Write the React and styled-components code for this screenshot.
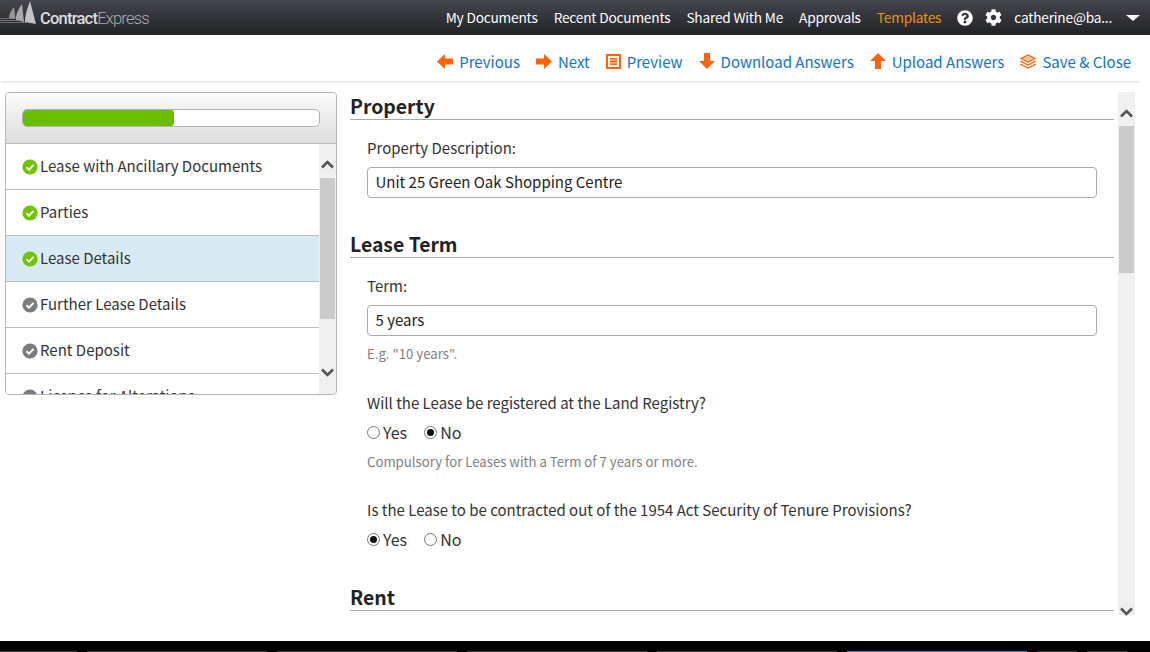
import React from "react";
import styled, { createGlobalStyle } from "styled-components";
import { FaCog, FaQuestionCircle } from "react-icons/fa";

const Global = createGlobalStyle`
  html, body { margin: 0; padding: 0; height: 652px; overflow: hidden; background: #fff; }
  #root { height: 652px; }
  * { box-sizing: border-box; }
`;

const Page = styled.div`
  height: 652px;
  display: flex;
  flex-direction: column;
  font-family: "Noto Sans CJK SC", "Noto Sans", sans-serif;
  color: #333;
`;

const Header = styled.header`
  height: 35px;
  flex: none;
  display: flex;
  align-items: center;
  justify-content: space-between;
  background: linear-gradient(#45464e, #212226);
  color: #fff;
  overflow: hidden;
`;

const Logo = styled.div`
  display: flex;
  align-items: flex-start;
  height: 35px;
  font-family: "Roboto", sans-serif;
  font-size: 16.5px;
  letter-spacing: -0.78px;
`;

const LogoText = styled.div`
  margin: 9px 0 0 3px;
  line-height: 20px;
`;

const LogoBold = styled.span`
  font-weight: 500;
  color: #dcdcdc;
`;

const LogoLight = styled.span`
  color: #aeaeb1;
  font-weight: 300;
`;

const Nav = styled.nav`
  display: flex;
  align-items: center;
  font-size: 13.7px;
  letter-spacing: -0.2px;
  height: 35px;
`;

const NavItem = styled.span`
  margin-left: ${(p) => p.$gap ?? 16}px;
  color: ${(p) => (p.$active ? "#f39200" : "#fff")};
  white-space: nowrap;
  line-height: 1;
  display: flex;
  align-items: center;
`;

const Caret = styled.span`
  width: 0;
  height: 0;
  margin: 0 10px 0 14px;
  border-left: 7.5px solid transparent;
  border-right: 7.5px solid transparent;
  border-top: 6px solid #fff;
`;

const Toolbar = styled.div`
  height: 48px;
  flex: none;
  display: flex;
  align-items: center;
  justify-content: flex-end;
  margin: 0 10px 0 1px;
  padding: 6px 9px 0 0;
  border-bottom: 2px solid #eee;
`;

const Action = styled.a`
  display: flex;
  align-items: center;
  margin-left: ${(p) => p.$gap ?? 16}px;
  color: #0f74c8;
  font-size: 15px;
  white-space: nowrap;
  line-height: 1;
  gap: 6px;
`;

const Body = styled.div`
  flex: 1;
  min-height: 0;
  display: flex;
  align-items: flex-start;
  padding: 9px 15px 0 5px;
`;

const Panel = styled.aside`
  width: 332px;
  height: 303px;
  flex: none;
  border: 1px solid #b4b4b4;
  border-radius: 4px;
  display: flex;
  flex-direction: column;
  overflow: hidden;
`;

const ProgressHead = styled.div`
  height: 51px;
  flex: none;
  padding: 16px 16px 0;
  background: linear-gradient(#fafafa, #dedede);
  border-bottom: 1px solid #b9b9b9;
`;

const ProgressTrack = styled.div`
  height: 18px;
  background: #fff;
  border: 1px solid #b0b0b0;
  border-radius: 5px;
  overflow: hidden;
`;

const ProgressFill = styled.div`
  height: 100%;
  background: #6bbd00;
  border-radius: 3px;
`;

const PanelBody = styled.div`
  flex: 1;
  min-height: 0;
  display: flex;
`;

const List = styled.div`
  flex: 1;
  min-width: 0;
  overflow: hidden;
`;

const ListItem = styled.div`
  height: 46px;
  display: flex;
  align-items: center;
  gap: 2px;
  padding: 0 0 0 16px;
  font-size: 15px;
  line-height: 1;
  color: #333;
  background: ${(p) => (p.$selected ? "#d8ebf4" : "#fff")};
  border-bottom: 1px solid #bcbcbc;
`;

const ItemText = styled.span`
  position: relative;
  top: -1px;
`;

const Track = styled.div`
  width: 17px;
  flex: none;
  background: #f0f0f0;
  padding: 0 1px;
  display: flex;
  flex-direction: column;
  align-items: center;
`;

const ArrowBtn = styled.div`
  height: ${(p) => p.$h}px;
  padding-top: ${(p) => p.$pad ?? 0}px;
  flex: none;
  display: flex;
  align-items: center;
  justify-content: center;
`;

const TrackSpace = styled.div`
  flex: 1;
  min-height: 0;
  width: 100%;
`;

const Thumb = styled.div`
  height: ${(p) => p.$h}px;
  flex: none;
  width: 100%;
  background: #cbcbcb;
`;

const Main = styled.main`
  flex: 1;
  min-width: 0;
  height: 523px;
  margin-left: 13px;
  display: flex;
`;

const Content = styled.div`
  flex: 1;
  min-width: 0;
  overflow: hidden;
  padding-right: 4px;
`;

const SectionTitle = styled.h2`
  margin: ${(p) => p.$top}px 0 0;
  height: 28px;
  font-size: 19.4px;
  line-height: 28px;
  font-weight: 700;
  color: #222;
  border-bottom: 1px solid #a9a9a9;
`;

const Field = styled.div`
  margin: ${(p) => p.$top}px 0 0 17px;
  width: 730px;
`;

const Label = styled.div`
  font-size: 15px;
  line-height: 20px;
  color: #333;
`;

const TextBox = styled.div`
  height: 31px;
  margin-top: 9px;
  padding: 0 7.5px 2px;
  border: 1px solid #ababab;
  border-radius: 4px;
  display: flex;
  align-items: center;
  font-size: 15px;
  color: #222;
`;

const Hint = styled.div`
  margin-top: ${(p) => p.$top}px;
  font-size: 13.2px;
  line-height: 18px;
  color: #808080;
`;

const RadioRow = styled.div`
  display: flex;
  align-items: center;
  margin-top: 9px;
  height: 20px;
  font-size: 16px;
  line-height: 20px;
`;

const RadioOption = styled.label`
  display: flex;
  align-items: center;
  gap: 3px;
  margin-right: 17px;
  color: #333;
`;

const RadioDot = styled.span`
  width: 13px;
  height: 13px;
  border-radius: 50%;
  border: 1px solid #777;
  background: #fff;
  display: flex;
  align-items: center;
  justify-content: center;
  &::after {
    content: "";
    width: 7px;
    height: 7px;
    border-radius: 50%;
    background: ${(p) => (p.$on ? "#111" : "transparent")};
  }
`;

const Taskbar = styled.footer`
  height: 11px;
  flex: none;
  background: #000;
  display: flex;
  align-items: flex-end;
  gap: 10px;
`;

const TaskSlot = styled.div`
  height: 1px;
  width: ${(p) => p.$w}px;
  background: ${(p) => (p.$active ? "#3b82d6" : "#3a3a3a")};
`;

const Check = ({ grey }) => (
  <svg width="16" height="16" viewBox="0 0 16 16" style={{ flex: "none" }}>
    <circle cx="8" cy="8" r="7.6" fill={grey ? "#7b7b7b" : "#6fc400"} />
    <path d="M4.4 8.2 L7 10.7 L11.6 5.9" fill="none" stroke="#fff" strokeWidth="2" />
  </svg>
);

const Chevron = ({ down }) => (
  <svg width="13" height="9" viewBox="0 0 13 9">
    <path d={down ? "M1 1.5 L6.5 7 L12 1.5" : "M1 7.5 L6.5 2 L12 7.5"} fill="none" stroke="#555" strokeWidth="2.6" />
  </svg>
);

const O = "#f9650c";
const ArrowLeft = () => (
  <svg width="16" height="15" viewBox="0 0 16 15"><path d="M0 7.5 L8 0 V4.5 H16 V10.5 H8 V15 Z" fill={O} /></svg>
);
const ArrowRight = () => (
  <svg width="16" height="15" viewBox="0 0 16 15"><path d="M16 7.5 L8 0 V4.5 H0 V10.5 H8 V15 Z" fill={O} /></svg>
);
const ArrowDown = () => (
  <svg width="16" height="16" viewBox="0 0 16 16"><path d="M8 16 L0 8 H5 V0 H11 V8 H16 Z" fill={O} /></svg>
);
const ArrowUp = () => (
  <svg width="16" height="16" viewBox="0 0 16 16"><path d="M8 0 L16 8 H11 V16 H5 V8 H0 Z" fill={O} /></svg>
);
const PreviewIcon = () => (
  <svg width="15" height="15" viewBox="0 0 15 15">
    <rect x="1" y="1" width="13" height="13" fill="#fff" stroke={O} strokeWidth="2" />
    <rect x="4" y="4" width="7" height="7" fill="#fa9a5c" />
    <path d="M4 4.5 H11 M4 7.5 H11 M4 10.5 H11" stroke={O} strokeWidth="1" />
  </svg>
);
const LayersIcon = () => (
  <svg width="16" height="15" viewBox="0 0 16 15" fill="none" stroke={O} strokeWidth="1.3">
    <path d="M8 1 L15 4.5 L8 8 L1 4.5 Z" fill="#fcc7a3" />
    <path d="M2.2 7 L1 7.6 L8 11 L15 7.6 L13.8 7" />
    <path d="M2.2 10 L1 10.6 L8 14 L15 10.6 L13.8 10" />
  </svg>
);

const LogoMark = () => (
  <svg width="37" height="24" viewBox="0 0 37 24">
    <path d="M9 18 C9 14 11 11 14 7 L15.5 19 Z" fill="#98989a" />
    <path d="M16 20 C15.5 14 19 8 22 4 L24 22 Z" fill="#a8a8aa" />
    <path d="M25 22 C25 14 28 7 30 1 L36 24 Z" fill="#c2c2c4" />
    <path d="M0 18.5 H14 M0 20.5 H20 M0 22.5 H27" stroke="#85858a" strokeWidth="0.7" />
  </svg>
);

const steps = [
  { label: "Lease with Ancillary Documents" },
  { label: "Parties" },
  { label: "Lease Details", selected: true },
  { label: "Further Lease Details", grey: true },
  { label: "Rent Deposit", grey: true },
  { label: "Licence for Alterations", grey: true },
];

const slots = [77, 180, 180, 180, 180, 180, 40, 40];

export default function App() {
  return (
    <Page>
      <Global />
      <Header>
        <Logo>
          <LogoMark />
          <LogoText>
            <LogoBold>Contract</LogoBold>
            <LogoLight>Express</LogoLight>
          </LogoText>
        </Logo>
        <Nav>
          <NavItem>My Documents</NavItem>
          <NavItem>Recent Documents</NavItem>
          <NavItem>Shared With Me</NavItem>
          <NavItem>Approvals</NavItem>
          <NavItem $active>Templates</NavItem>
          <NavItem><FaQuestionCircle size={16} /></NavItem>
          <NavItem $gap={12}><FaCog size={17} /></NavItem>
          <NavItem $gap={12}>catherine@ba...</NavItem>
          <Caret />
        </Nav>
      </Header>
      <Toolbar>
        <Action $gap={0}><ArrowLeft />Previous</Action>
        <Action><ArrowRight />Next</Action>
        <Action><PreviewIcon />Preview</Action>
        <Action><ArrowDown />Download Answers</Action>
        <Action><ArrowUp />Upload Answers</Action>
        <Action><LayersIcon />Save &amp; Close</Action>
      </Toolbar>
      <Body>
        <Panel>
          <ProgressHead>
            <ProgressTrack>
              <ProgressFill style={{ width: "51%" }} />
            </ProgressTrack>
          </ProgressHead>
          <PanelBody>
            <List>
              {steps.map((s) => (
                <ListItem key={s.label} $selected={s.selected}>
                  <Check grey={s.grey} />
                  <ItemText>{s.label}</ItemText>
                </ListItem>
              ))}
            </List>
            <Track>
              <ArrowBtn $h={34} $pad={7}><Chevron /></ArrowBtn>
              <Thumb $h={141} />
              <TrackSpace />
              <ArrowBtn $h={45} $pad={2}><Chevron down /></ArrowBtn>
            </Track>
          </PanelBody>
        </Panel>
        <Main>
          <Content>
            <SectionTitle $top={0}>Property</SectionTitle>
            <Field $top={18}>
              <Label>Property Description:</Label>
              <TextBox>Unit 25 Green Oak Shopping Centre</TextBox>
            </Field>
            <SectionTitle $top={32}>Lease Term</SectionTitle>
            <Field $top={18}>
              <Label>Term:</Label>
              <TextBox>5 years</TextBox>
              <Hint $top={9}>E.g. "10 years".</Hint>
            </Field>
            <Field $top={30}>
              <Label>Will the Lease be registered at the Land Registry?</Label>
              <RadioRow>
                <RadioOption><RadioDot />Yes</RadioOption>
                <RadioOption><RadioDot $on />No</RadioOption>
              </RadioRow>
              <Hint $top={11}>Compulsory for Leases with a Term of 7 years or more.</Hint>
            </Field>
            <Field $top={29}>
              <Label>Is the Lease to be contracted out of the 1954 Act Security of Tenure Provisions?</Label>
              <RadioRow>
                <RadioOption><RadioDot $on />Yes</RadioOption>
                <RadioOption><RadioDot />No</RadioOption>
              </RadioRow>
            </Field>
            <SectionTitle $top={34}>Rent</SectionTitle>
          </Content>
          <Track>
            <ArrowBtn $h={34} $pad={8}><Chevron /></ArrowBtn>
            <Thumb $h={147} />
            <TrackSpace />
            <ArrowBtn $h={12} $pad={4}><Chevron down /></ArrowBtn>
          </Track>
        </Main>
      </Body>
      <Taskbar>
        {slots.map((w, i) => (
          <TaskSlot key={i} $w={w} $active={i === 5} />
        ))}
      </Taskbar>
    </Page>
  );
}
